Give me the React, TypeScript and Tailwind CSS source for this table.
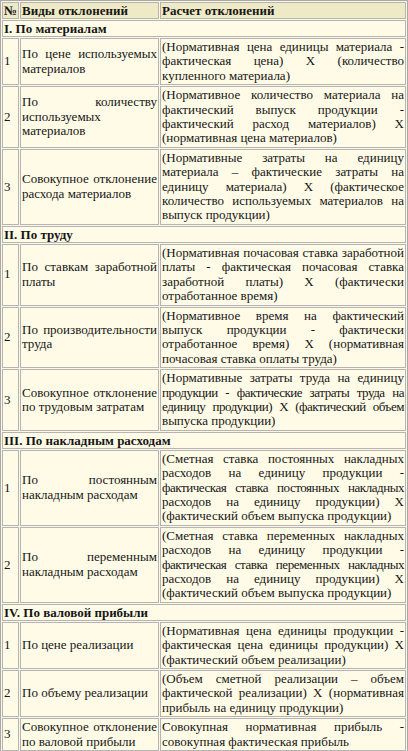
import { Fragment } from "react";

// each cell is written line by line, as the lines break in the original table
type Row = { n: string; kind: string[]; calc: string[] };
type Section = { title: string; rows: Row[] };

const sections: Section[] = [
  {
    title: "I. По материалам",
    rows: [
      {
        n: "1",
        kind: ["По цене используемых", "материалов"],
        calc: [
          "(Нормативная цена единицы материала -",
          "фактическая цена) X (количество",
          "купленного материала)",
        ],
      },
      {
        n: "2",
        kind: ["По количеству", "используемых", "материалов"],
        calc: [
          "(Нормативное количество материала на",
          "фактический выпуск продукции -",
          "фактический расход материалов) X",
          "(нормативная цена материалов)",
        ],
      },
      {
        n: "3",
        kind: ["Совокупное отклонение", "расхода материалов"],
        calc: [
          "(Нормативные затраты на единицу",
          "материала – фактические затраты на",
          "единицу материала) X (фактическое",
          "количество используемых материалов на",
          "выпуск продукции)",
        ],
      },
    ],
  },
  {
    title: "II. По труду",
    rows: [
      {
        n: "1",
        kind: ["По ставкам заработной", "платы"],
        calc: [
          "(Нормативная почасовая ставка заработной",
          "платы - фактическая почасовая ставка",
          "заработной платы) X (фактически",
          "отработанное время)",
        ],
      },
      {
        n: "2",
        kind: ["По производительности", "труда"],
        calc: [
          "(Нормативное время на фактический",
          "выпуск продукции - фактически",
          "отработанное время) X (нормативная",
          "почасовая ставка оплаты труда)",
        ],
      },
      {
        n: "3",
        kind: ["Совокупное отклонение", "по трудовым затратам"],
        calc: [
          "(Нормативные затраты труда на единицу",
          "~продукции - фактические затраты труда на",
          "~единицу продукции) X (фактический объем",
          "выпуска продукции)",
        ],
      },
    ],
  },
  {
    title: "III. По накладным расходам",
    rows: [
      {
        n: "1",
        kind: ["По постоянным", "накладным расходам"],
        calc: [
          "(Сметная ставка постоянных накладных",
          "расходов на единицу продукции -",
          "~фактическая ставка постоянных накладных",
          "расходов на единицу продукции) X",
          "(фактический объем выпуска продукции)",
        ],
      },
      {
        n: "2",
        kind: ["По переменным", "накладным расходам"],
        calc: [
          "(Сметная ставка переменных накладных",
          "расходов на единицу продукции -",
          "~фактическая ставка переменных накладных",
          "расходов на единицу продукции) X",
          "(фактический объем выпуска продукции)",
        ],
      },
    ],
  },
  {
    title: "IV. По валовой прибыли",
    rows: [
      {
        n: "1",
        kind: ["По цене реализации"],
        calc: [
          "(Нормативная цена единицы продукции -",
          "фактическая цена единицы продукции) X",
          "(фактический объем реализации)",
        ],
      },
      {
        n: "2",
        kind: ["По объему реализации"],
        calc: [
          "(Объем сметной реализации – объем",
          "фактической реализации) X (нормативная",
          "прибыль на единицу продукции)",
        ],
      },
      {
        n: "3",
        kind: ["Совокупное отклонение", "по валовой прибыли"],
        calc: ["Совокупная нормативная прибыль -", "совокупная фактическая прибыль"],
      },
    ],
  },
];

const cell = "border border-[#b4b4b4] p-[1px] align-middle";

// lines starting with "~" are set a bit tighter so they keep on one line
function Lines({ lines }: { lines: string[] }) {
  return (
    <>
      {lines.map((l, i) => {
        const tight = l.startsWith("~");
        const text = tight ? l.slice(1) : l;
        const last = i === lines.length - 1;
        return (
          <span
            key={i}
            className={`block ${last ? "text-left" : "text-justify [text-align-last:justify]"} ${
              tight ? "tracking-[-0.45px]" : ""
            }`}
          >
            {text}
          </span>
        );
      })}
    </>
  );
}

export default function App() {
  return (
    <div className="w-[408px] bg-white font-['Liberation_Serif','Times_New_Roman',serif] text-[13px] leading-[14.4px] text-[#161616]">
      <table className="w-[408px] table-fixed border-separate border-spacing-[1px] border border-[#a8a8a8] bg-[#fcf8e3]">
        <thead>
          <tr className="bg-[#eeeac6] leading-[13px]">
            <th className={`${cell} w-[17px] text-left font-bold`}>№</th>
            <th className={`${cell} w-[139px] text-left font-bold`}>Виды отклонений</th>
            <th className={`${cell} text-left font-bold`}>Расчет отклонений</th>
          </tr>
        </thead>
        <tbody>
          {sections.map((s) => (
            <Fragment key={s.title}>
              <tr className="bg-[#fffbe6] leading-[13px]">
                <td colSpan={3} className={`${cell} font-bold`}>
                  {s.title}
                </td>
              </tr>
              {s.rows.map((r) => (
                <tr key={s.title + r.n} className="bg-[#fffbe6]">
                  <td className={cell}>{r.n}</td>
                  <td className={cell}>
                    <Lines lines={r.kind} />
                  </td>
                  <td className={cell}>
                    <Lines lines={r.calc} />
                  </td>
                </tr>
              ))}
            </Fragment>
          ))}
        </tbody>
      </table>
    </div>
  );
}
